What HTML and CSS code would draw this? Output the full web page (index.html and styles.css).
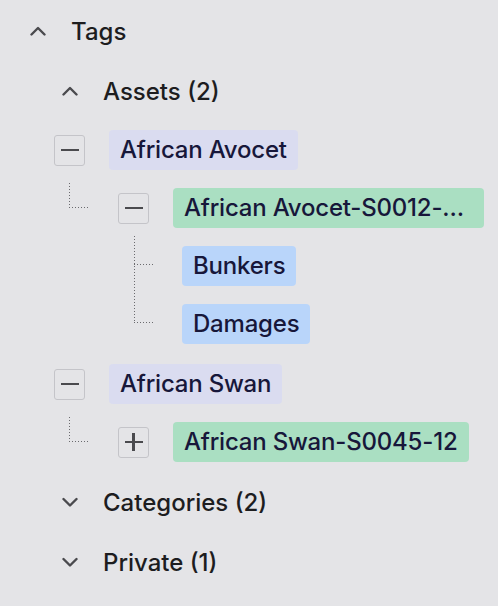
FILE: index.html
```html
<!DOCTYPE html>
<html lang="en">
<head>
    <meta charset="UTF-8">
    <meta name="viewport" content="width=device-width, initial-scale=1.0">
    <title>Tags</title>
    <link rel="stylesheet" href="styles.css">
</head>
<body>
    <div class="tree">
        <div class="head">
            <svg class="chevron" viewBox="0 0 16 10"><polyline points="1.5,8.5 8,2 14.5,8.5"/></svg>
            <span>Tags</span>
        </div>
        <div class="groups">
            <div class="group">
                <div class="head">
                    <svg class="chevron" viewBox="0 0 16 10"><polyline points="1.5,8.5 8,2 14.5,8.5"/></svg>
                    <span>Assets (2)</span>
                </div>
                <div class="nodes">
                    <div class="node">
                        <div class="row">
                            <span class="box minus"></span>
                            <span class="chip asset">African Avocet</span>
                        </div>
                        <div class="children">
                            <div class="node">
                                <div class="row">
                                    <span class="link"></span>
                                    <span class="box minus"></span>
                                    <span class="chip record" title="African Avocet-S0012-12-North">African Avocet-S0012-12-North</span>
                                </div>
                                <div class="leaves">
                                    <div class="row">
                                        <span class="link first"></span>
                                        <span class="chip tag">Bunkers</span>
                                    </div>
                                    <div class="row">
                                        <span class="link next"></span>
                                        <span class="chip tag">Damages</span>
                                    </div>
                                </div>
                            </div>
                        </div>
                    </div>
                    <div class="node">
                        <div class="row">
                            <span class="box minus"></span>
                            <span class="chip asset">African Swan</span>
                        </div>
                        <div class="children">
                            <div class="node">
                                <div class="row">
                                    <span class="link"></span>
                                    <span class="box plus"></span>
                                    <span class="chip record">African Swan-S0045-12</span>
                                </div>
                            </div>
                        </div>
                    </div>
                </div>
            </div>
            <div class="head">
                <svg class="chevron" viewBox="0 0 16 10"><polyline points="1.5,2 8,8.5 14.5,2"/></svg>
                <span>Categories (2)</span>
            </div>
            <div class="head">
                <svg class="chevron" viewBox="0 0 16 10"><polyline points="1.5,2 8,8.5 14.5,2"/></svg>
                <span>Private (1)</span>
            </div>
        </div>
    </div>
</body>
</html>
```

FILE: styles.css
```css
body {
    margin: 0;
    background: #e4e4e7;
    font-family: Inter, "Noto Sans", sans-serif;
    font-size: 24px;
    color: #1d1d1f;
}
.tree {
    padding: 11px 14px 0 30px;
    display: flex;
    flex-direction: column;
    gap: 20px;
}
.head {
    display: flex;
    align-items: center;
    gap: 25px;
    height: 40px;
    font-weight: 500;
}
.chevron {
    width: 16px;
    height: 10px;
    flex: none;
    fill: none;
    stroke: #4a4a4e;
    stroke-width: 2.4;
    stroke-linecap: round;
    stroke-linejoin: round;
}
.groups {
    padding-left: 32px;
    display: flex;
    flex-direction: column;
    gap: 20px;
}
.nodes {
    margin: 19px 0 0 -8px;
    display: flex;
    flex-direction: column;
    gap: 20px;
}
.row {
    display: flex;
    align-items: center;
    height: 40px;
    min-width: 0;
}
.children {
    margin-top: 18px;
    padding-left: 15px;
}
.leaves {
    margin-top: 18px;
    padding-left: 65px;
    display: flex;
    flex-direction: column;
    gap: 18px;
}
.box {
    position: relative;
    flex: none;
    width: 29px;
    height: 29px;
    margin: 0 24px 0 0;
    border: 1.5px solid #c4c4c9;
    border-radius: 3px;
}
.box::before,
.box::after {
    content: "";
    position: absolute;
    background: #4a4a4e;
    left: 5.5px;
    right: 5.5px;
    top: 13px;
    height: 2.5px;
}
.box::after {
    display: none;
}
.box.plus::after {
    display: block;
    left: 13px;
    width: 2.5px;
    right: auto;
    top: 5.5px;
    height: 18px;
}
.link {
    flex: none;
    align-self: flex-start;
    width: 21px;
    height: 25px;
    margin: -5px 28px 0 0;
    background-image:
        linear-gradient(to bottom, #6a6a6e 1px, transparent 1px),
        linear-gradient(to right, #6a6a6e 1px, transparent 1px);
    background-size: 1px 3px, 3px 1px;
    background-repeat: repeat-y, repeat-x;
    background-position: left top, left bottom;
}
.link.first {
    width: 20px;
    height: 29px;
    margin-top: -10px;
}
.link.next {
    width: 20px;
    height: 57px;
    margin-top: -38px;
}
.chip {
    flex: 0 1 auto;
    min-width: 0;
    height: 40px;
    line-height: 40px;
    padding: 0 11px;
    border-radius: 4px;
    color: #17173a;
    font-weight: 500;
    letter-spacing: -0.2px;
    white-space: nowrap;
    overflow: hidden;
    text-overflow: ellipsis;
}
.asset {
    background: #dadcf0;
}
.record {
    background: #aadfc2;
}
.tag {
    background: #b9d5fa;
}
```
